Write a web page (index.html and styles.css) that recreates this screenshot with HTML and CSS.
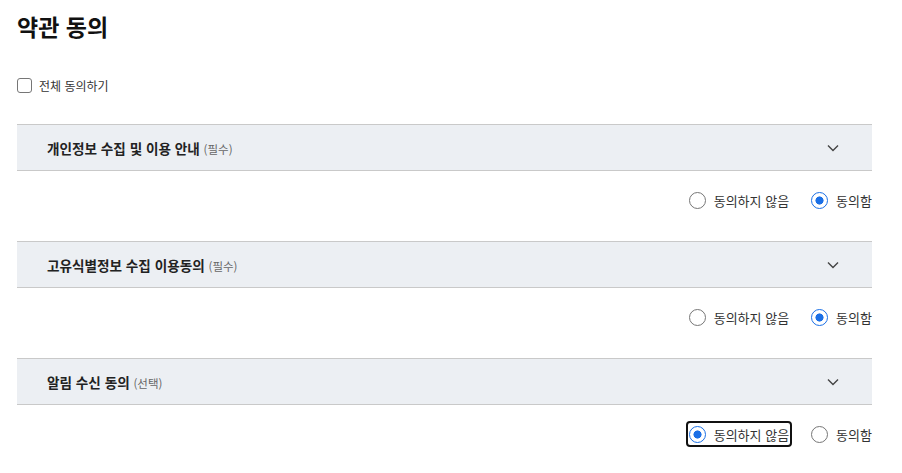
FILE: index.html
```html
<!DOCTYPE html>
<html lang="ko">
<head>
<meta charset="utf-8">
<title>약관 동의</title>
<link rel="stylesheet" href="styles.css">
</head>
<body>
<div class="page">
  <h1 class="title">약관 동의</h1>
  <label class="all-agree">
    <input type="checkbox" class="checkbox">
    <span>전체 동의하기</span>
  </label>

  <section class="term">
    <div class="term-head">
      <span class="term-title">개인정보 수집 및 이용 안내 <span class="term-tag">(필수)</span></span>
      <svg class="chev" width="12" height="8" viewBox="0 0 12 8"><path d="M1 1.5l5 5 5-5" fill="none" stroke="#444" stroke-width="1.4"/></svg>
    </div>
    <div class="options">
      <label class="opt"><input type="radio" name="t1" class="radio"><span>동의하지 않음</span></label>
      <label class="opt"><input type="radio" name="t1" class="radio" checked><span>동의함</span></label>
    </div>
  </section>

  <section class="term">
    <div class="term-head">
      <span class="term-title">고유식별정보 수집 이용동의 <span class="term-tag">(필수)</span></span>
      <svg class="chev" width="12" height="8" viewBox="0 0 12 8"><path d="M1 1.5l5 5 5-5" fill="none" stroke="#444" stroke-width="1.4"/></svg>
    </div>
    <div class="options">
      <label class="opt"><input type="radio" name="t2" class="radio"><span>동의하지 않음</span></label>
      <label class="opt"><input type="radio" name="t2" class="radio" checked><span>동의함</span></label>
    </div>
  </section>

  <section class="term">
    <div class="term-head">
      <span class="term-title">알림 수신 동의 <span class="term-tag">(선택)</span></span>
      <svg class="chev" width="12" height="8" viewBox="0 0 12 8"><path d="M1 1.5l5 5 5-5" fill="none" stroke="#444" stroke-width="1.4"/></svg>
    </div>
    <div class="options">
      <label class="opt opt-focus"><input type="radio" name="t3" class="radio" checked><span>동의하지 않음</span></label>
      <label class="opt"><input type="radio" name="t3" class="radio"><span>동의함</span></label>
    </div>
  </section>
</div>
</body>
</html>
```

FILE: styles.css
```css
* { box-sizing: border-box; }
html, body { margin: 0; padding: 0; background: #fff; }
body {
  font-family: "Noto Sans CJK KR", "Noto Sans", sans-serif;
  color: #222;
}
.page {
  padding: 10px 30px 0 17px;
}
.title {
  margin: 0;
  font-size: 23px;
  line-height: 32px;
  font-weight: 700;
  color: #111;
}
.all-agree {
  margin-top: 34px;
  display: flex;
  align-items: center;
  gap: 7px;
  height: 18px;
  font-size: 12px;
  color: #333;
}
.checkbox {
  appearance: none;
  -webkit-appearance: none;
  width: 15px;
  height: 15px;
  margin: 0;
  border: 1px solid #767676;
  border-radius: 3px;
  background: #fff;
}
.term {
  margin-top: 30px;
}
.term + .term {
  margin-top: 0;
}
.term-head {
  height: 47px;
  display: flex;
  align-items: center;
  justify-content: space-between;
  padding: 0 33px 0 30px;
  background: #eceff3;
  border-top: 1px solid #c9c9c9;
  border-bottom: 1px solid #c9c9c9;
}
.term-title {
  font-size: 13.6px;
  font-weight: 700;
  color: #222;
}
.term-tag {
  font-size: 11.5px;
  font-weight: 400;
  color: #666;
}
.chev { display: block; }
.options {
  display: flex;
  justify-content: flex-end;
  gap: 16px;
  padding-top: 16px;
  padding-bottom: 28px;
  margin-right: -3px;
}
.opt {
  display: flex;
  align-items: center;
  gap: 8px;
  height: 26px;
  padding: 0 1px;
  border: 2px solid transparent;
  border-radius: 4px;
  font-size: 13px;
  color: #333;
}
.opt-focus {
  border-color: #111;
}
.radio {
  appearance: none;
  -webkit-appearance: none;
  width: 17px;
  height: 17px;
  margin: 0;
  border: 1px solid #767676;
  border-radius: 50%;
  background: #fff;
}
.radio:checked {
  border: 1.5px solid #1a6fe6;
  background: radial-gradient(circle, #1a6fe6 0 3.8px, #fff 4.3px);
}
```
